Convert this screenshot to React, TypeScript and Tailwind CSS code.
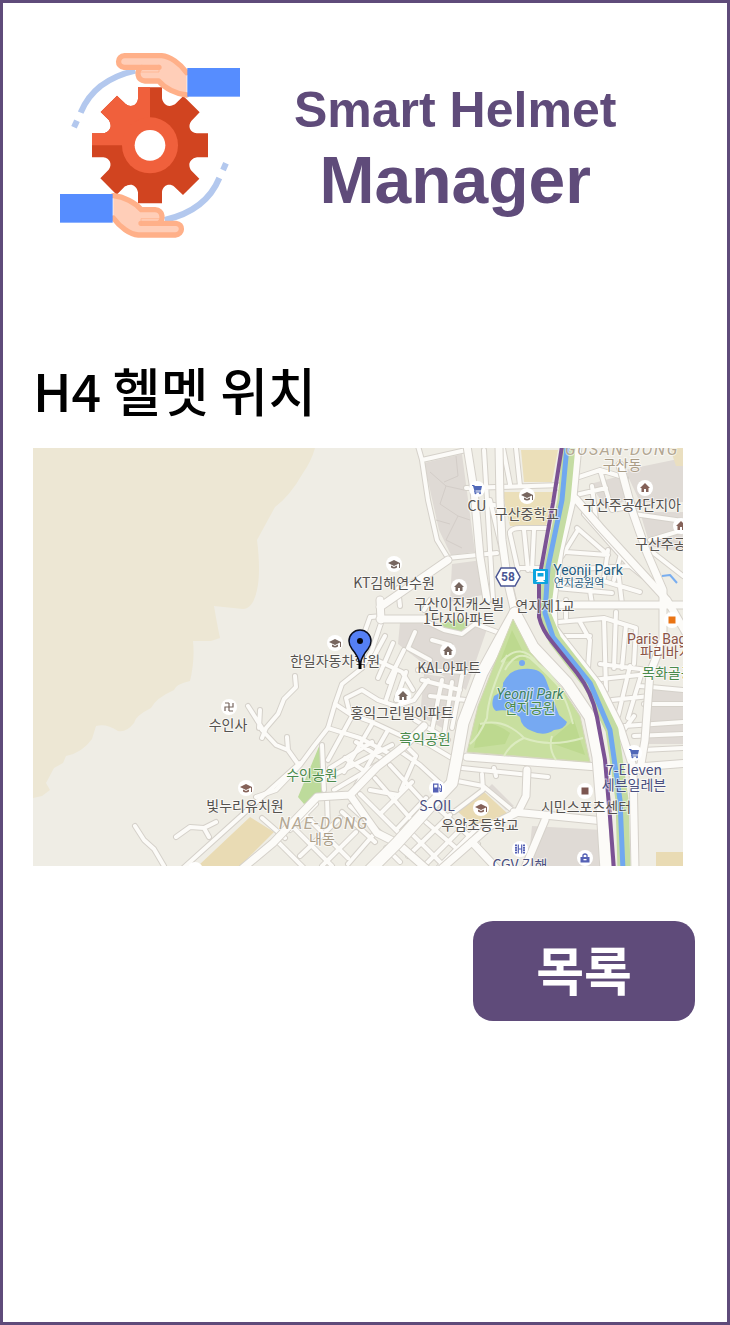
import React from "react";

type Spot = { x: number; y: number; kind: "home" | "school" | "cart" | "square" | "fuel" | "film" | "bag" | "temple"; color: string };
type Tone = "plain" | "park" | "station" | "shop" | "food" | "district";
type Label = { x: number; y: number; text: string; anchor?: "start" | "middle"; tone?: Tone };

const toneClass: Record<Tone, string> = {
  plain: "fill-[#55524f]",
  park: "fill-[#4a8a4c]",
  station: "fill-[#1f5c80]",
  shop: "fill-[#4a4f80]",
  food: "fill-[#8a5346]",
  district: "fill-[#a99c86]",
};

const labels: Label[] = [
  { x: 477, y: 511, text: "CU" },
  { x: 527, y: 519, text: "구산중학교" },
  { x: 583, y: 510, text: "구산주공4단지아", anchor: "start" },
  { x: 635, y: 549, text: "구산주공", anchor: "start" },
  { x: 622, y: 470, text: "구산동", tone: "district" },
  { x: 394, y: 588, text: "KT김해연수원" },
  { x: 459, y: 609, text: "구산이진캐스빌" },
  { x: 459, y: 624, text: "1단지아파트" },
  { x: 545, y: 611, text: "연지제1교" },
  { x: 335, y: 666, text: "한일자동차학원" },
  { x: 449, y: 673, text: "KAL아파트" },
  { x: 402, y: 718, text: "홍익그린빌아파트" },
  { x: 228, y: 730, text: "수인사" },
  { x: 425, y: 744, text: "흑익공원", tone: "park" },
  { x: 312, y: 780, text: "수인공원", tone: "park" },
  { x: 245, y: 811, text: "빛누리유치원" },
  { x: 322, y: 844, text: "내동", tone: "district" },
  { x: 437, y: 811, text: "S-OIL", tone: "shop" },
  { x: 480, y: 830, text: "우암초등학교" },
  { x: 520, y: 870, text: "CGV 김해", tone: "shop" },
  { x: 586, y: 812, text: "시민스포츠센터" },
  { x: 634, y: 775, text: "7-Eleven", tone: "shop" },
  { x: 634, y: 790, text: "세븐일레븐", tone: "shop" },
  { x: 640, y: 657, text: "파리바게", anchor: "start", tone: "food" },
  { x: 642, y: 678, text: "목화골공", anchor: "start", tone: "park" },
  { x: 530, y: 713, text: "연지공원", tone: "park" },
];

const spots: Spot[] = [
  { x: 477, y: 489, kind: "cart", color: "#5068b8" },
  { x: 527, y: 496, kind: "school", color: "#77665f" },
  { x: 645, y: 488, kind: "home", color: "#856259" },
  { x: 681, y: 526, kind: "home", color: "#856259" },
  { x: 394, y: 564, kind: "school", color: "#77665f" },
  { x: 459, y: 587, kind: "home", color: "#77665f" },
  { x: 335, y: 643, kind: "school", color: "#77665f" },
  { x: 448, y: 651, kind: "home", color: "#77665f" },
  { x: 403, y: 696, kind: "home", color: "#77665f" },
  { x: 229, y: 707, kind: "temple", color: "#77665f" },
  { x: 246, y: 788, kind: "school", color: "#856259" },
  { x: 437, y: 788, kind: "fuel", color: "#5561b5" },
  { x: 481, y: 808, kind: "school", color: "#856259" },
  { x: 520, y: 849, kind: "film", color: "#5561b5" },
  { x: 585, y: 858, kind: "bag", color: "#5561b5" },
  { x: 585, y: 791, kind: "square", color: "#7c5650" },
  { x: 634, y: 753, kind: "cart", color: "#5068b8" },
  { x: 672, y: 620, kind: "square", color: "#ea7414" },
  { x: 195, y: 870, kind: "school", color: "#77665f" },
];

const alleys = [
  "M418 446 L422 460 L428 500 L437 540 L448 558 L497 553 M422 460 L466 450",
  "M370 617 L360 645 M371 617 L382 616 M362 668 L342 684 L335 704 L328 728 L314 746 L300 765 L276 790 L256 797",
  "M295 676 L296 687 L284 699 L278 714 L266 728 L262 738 M262 728 L248 706 M259 728 L260 710 M262 730 L276 745 L288 750 L287 737 M288 750 L298 764",
  "M135 826 L144 840 L154 849 L164 866 M176 837 L190 827 L204 828 L216 822 M204 828 L209 837 M181 870 L262 797 L300 763",
  "M382 620 L372 650 L362 668 M385 636 L372 660 M393 643 L378 678 M404 650 L388 682 M372 658 L402 672 L413 690 M396 670 L386 700 M406 672 L396 700",
  "M335 704 L350 714 L372 722 L402 736 L428 744 L455 760 M350 714 L346 698 L362 690 L378 700 L396 706 L414 700 L428 680",
  "M328 728 L360 738 L390 754 M352 716 L328 760 M372 724 L344 772 M388 730 L356 786 M322 745 L324 790",
  "M330 768 L372 742 M328 778 L392 745 M334 790 L400 751 M345 758 L366 772 M356 742 L384 760",
  "M400 751 L420 765 L445 788 M408 748 L416 756 L401 790 M390 765 L424 802 M375 778 L410 818 M360 794 L400 834 M412 782 L382 812 M426 798 L396 830 M398 795 L370 790",
  "M327 797 L328 828 M302 812 L348 858 M290 824 L332 866 M276 840 L304 868 M262 818 L285 838 M316 804 L290 830 M340 818 L300 856 M356 832 L322 866 M342 812 L375 842 M350 806 L386 838 M374 834 L348 864",
  "M400 862 L386 848 M450 815 L408 856 M464 826 L424 866 M440 810 L478 844 M426 822 L456 848 M412 834 L444 866 M438 868 L480 825",
  "M462 768 L548 777 M494 768 L496 776 M452 780 L483 786 L512 810 M482 774 L483 790 L454 812",
  "M415 632 L408 648 L430 660 M432 640 L450 645 M418 670 L466 672 M430 696 L466 700 M442 680 L432 730 M452 682 L444 735 M462 676 L452 728 M422 680 L460 690 M415 720 L448 740",
  "M423 620 L444 630 L462 634 L475 624 L497 632 M398 588 L400 606 M424 610 L430 600",
  "M466 488 L562 485 M484 450 L493 600 M490 500 L514 600 M516 448 L520 486 M503 448 L510 484 M486 504 L502 506",
  "M510 532 Q512 528 520 528 L548 528 M524 530 L528 570 M510 534 L518 570 M534 530 L532 570 M520 568 L542 568",
  "M578 530 L562 556 M584 514 L630 566 M577 528 L608 555 L566 552 M608 550 L604 578 M622 550 L614 580 M562 570 L630 566 L655 586",
  "M556 588 L612 593 M566 600 L566 618 M560 584 L600 580 L640 592 M588 578 L592 604 M618 570 L622 604",
  "M570 480 L600 470 L626 478 M600 470 L612 510 L640 505 M634 514 L683 521 M642 544 L683 576 M650 540 L683 530 M576 495 L606 488 M592 486 L596 520 L616 545",
  "M558 622 L604 618 L636 628 L634 664 M580 622 L590 640 L588 668 M604 618 L606 690 M616 612 L614 668 M626 625 L622 668 M600 664 L648 670 M562 636 L590 636",
  "M592 680 L648 674 M612 700 L650 696 M624 726 L683 722 M634 736 L683 734 M618 716 L630 666 M628 718 L642 672 M640 686 L683 690 M644 704 L683 704 M642 750 L683 748 M618 738 L634 716",
];

const streets = [
  "M467 446 L474 490 L480 557 L487 600",
  "M499 446 L500 500 L502 540 L508 583 L515 613",
  "M380 607 L448 560 M380 600 L381 620 M380 619 L424 619",
  "M560 487 L576 499 L600 527 L633 563 L667 600 L690 640",
  "M543 605 L690 605",
  "M620 465 L633 513 L647 553 L663 590 L663 640 L650 673 L645 740 L640 770",
  "M578 446 L573 497 L560 550 L553 600 L554 628 L563 640 L600 687 L620 727 L633 767 L635 870",
  "M243 868 L273 843 L317 797 L350 795 L377 767 L403 747 L424 726",
  "M350 795 L377 833 L397 843 L430 872",
  "M467 757 L598 767",
  "M527 770 L526 796 L518 812 L490 826 L440 870 M514 812 L604 821 M545 820 L524 870",
  "M472 842 L500 872 M638 767 L690 763",
];

const avenues = [
  "M515 613 L500 640 L482 673 L463 723 L457 757 L452 783 L433 803 L397 843 L368 872",
  "M515 613 L533 647 L567 683 L590 717 L598 757 L602 807 L606 870",
];

function SpotGlyph({ kind, color }: { kind: Spot["kind"]; color: string }) {
  switch (kind) {
    case "home":
      return <path d="M-5 0 L0 -5 L5 0 H3.5 V4 H1 V1 H-1 V4 H-3.5 V0 Z" fill={color} />;
    case "school":
      return (
        <g fill={color}>
          <path d="M-6 -1 L0 -4 L6 -1 L0 2 Z" />
          <path d="M-3 1.5 L0 3 L3 1.5 V3.5 Q0 5.5 -3 3.5 Z M5 -1 H6 V4 H5 Z" />
        </g>
      );
    case "cart":
      return (
        <g fill={color}>
          <path d="M-5 -4 H-3 L-2 -3 H5 L4 1.5 H-1.5 L-1.5 2.5 H4 V3.5 H-3 L-2.7 1.5 L-4 -3 H-5 Z" />
          <circle cx="-1.5" cy="4.3" r="1" />
          <circle cx="3" cy="4.3" r="1" />
        </g>
      );
    case "square":
      return <rect x="-3.5" y="-3.5" width="7" height="7" fill={color} />;
    case "fuel":
      return (
        <g>
          <path d="M-4 -4.5 H1.5 V4.5 H-4 Z M-2.8 -3.2 V-0.5 H0.3 V-3.2 Z" fill={color} fillRule="evenodd" />
          <path d="M1.5 0 H3 V3.5 H4.5 V-2 L3 -4" fill="none" stroke={color} />
        </g>
      );
    case "film":
      return (
        <g fill="none" stroke={color}>
          <path d="M-4 -4.5 V4.5 M4 -4.5 V4.5" strokeWidth="2" strokeDasharray="1.8 0.6" />
          <path d="M-1.7 -4.5 V4.5 M1.7 -4.5 V4.5 M-1.7 0 H1.7" strokeWidth="1.2" />
        </g>
      );
    case "bag":
      return (
        <g>
          <rect x="-4.5" y="-1" width="9" height="5.5" fill={color} />
          <path d="M-2 -1 V-3 Q0 -5 2 -3 V-1" fill="none" stroke={color} strokeWidth="1.3" />
          <rect x="-1.5" y="1" width="3" height="1.3" fill="#fff" />
        </g>
      );
    case "temple":
      return <path d="M4 -4 V0 H-4 V4 M0 -4 V4 M0 -4 H-4 M0 4 H4" fill="none" stroke={color} strokeWidth="1.2" />;
  }
}

function Roads({ lines, edge, width }: { lines: string[]; edge: number; width: number }) {
  return (
    <g fill="none" strokeLinecap="round" strokeLinejoin="round">
      {lines.map((d) => <path key={"e" + d} d={d} stroke="#d5d1ca" strokeWidth={edge} />)}
      {lines.map((d) => <path key={"r" + d} d={d} stroke="#fcfbf8" strokeWidth={width} />)}
    </g>
  );
}

function HelmetMap() {
  return (
    <svg viewBox="33 448 650 418" className="block w-full h-auto" role="img" aria-label="H4 헬멧 위치 지도">
      <rect x="33" y="448" width="650" height="418" fill="#efede5" />
      <path d="M33 448 H315 Q311 462 303 473 Q290 496 275 507 L257 540 Q261 572 257 590 Q253 609 243 609 L214 606 Q217 624 220 638 L211 641 L193 641 Q195 660 190 681 Q176 684 174 690 Q156 698 151 708 Q135 716 134 723 Q126 733 118 731 Q106 723 96 726 L92 739 Q82 753 66 756 L63 763 L54 768 L46 783 L50 790 L42 796 L33 798 Z" fill="#ede7d4" />
      <path d="M424 463 L462 454 L475 552 L451 555 L439 530 Z M452 564 L482 560 L487 594 L450 602 Z M400 622 L488 626 L466 690 L424 664 L398 644 Z M424 674 L464 680 L446 730 L420 716 Z M625 470 L683 458 V502 H640 Z M640 512 H683 V552 L650 546 Z M650 690 H683 V744 H646 Z M532 826 L602 830 V866 H528 Z M492 784 L514 806 L506 810 L486 790 Z M590 484 L620 476 L628 500 L606 508 Z" fill="#dfdad5" />
      <path d="M521 450 H558 L552 482 H524 Z M502 492 H553 L546 526 H510 Z" fill="#ebdfb9" />
      <path d="M198 866 L250 817 L274 832 L240 866 Z M656 852 H683 V866 H656 Z M458 812 L481 789 L508 814 L486 828 L470 822 Z" fill="#e9dbb4" />
      <path d="M670 448 H683 V466 H676 Z" fill="#eadfc0" />
      <path d="M320 744 L323 795 L304 804 L298 797 Z M440 624 L462 618 L470 628 L456 634 Z" fill="#bddb9b" />
      <g fill="none" stroke="#d3cdc8" strokeWidth="1">
        <path d="M430 472 L446 486 L440 504 L458 516 L446 540 L462 548 M446 486 L464 490 M458 516 L470 520 M436 520 L450 524 M456 456 L458 476 L444 482" />
      </g>

      <Roads lines={alleys} edge={6} width={4} />
      <Roads lines={streets} edge={9} width={7} />
      <Roads lines={avenues} edge={13} width={11} />

      <path d="M513 619 L530 652 L563 690 L580 716 L590 762 L467 752 L478 706 L494 665 Z" fill="#c8df9f" stroke="#d4d6bb" />
      <path d="M479 724 Q492 720 510 733 L505 744 L474 748 Z M548 742 L574 720 L585 755 Z M512 630 L527 660 L500 662 Z" fill="#bdd98f" />
      <path d="M501 662 Q521 640 538 664 Q562 680 573 724 M505 670 Q516 650 530 658 Q548 674 562 690 M480 724 Q505 718 524 738 Q550 748 583 738 M507 655 Q488 694 487 718 Q478 738 470 744 M552 736 Q548 748 556 760 M524 738 Q510 744 504 756" fill="none" stroke="#dcebc0" strokeWidth="2" />
      <path d="M503 683 Q510 669 523 669 Q541 667 546 680 L553 699 L559 715 L567 722 Q565 729 554 730 Q544 737 532 731 Q521 727 520 717 Q509 708 496 711 Q490 706 494 696 Q504 691 503 683 Z" fill="#76a9f2" />
      <circle cx="522" cy="663" r="3" fill="#76a9f2" />

      <g fill="none" strokeLinejoin="round">
        <path d="M569 446 L564 500 L550 567 L544 613 L555 640 L590 685 L612 730 L622 800 L624 870" stroke="#c4dca3" strokeWidth="13" />
        <path d="M567 446 L562 500 L548 567 L545 613 L553 637 L590 683 L610 730 L620 800 L623 870" stroke="#70a8f0" strokeWidth="5" />
        <path d="M562 446 L553 503 L539 580 L539 617 Q542 630 553 643 L577 673 Q592 692 597 717 L605 760 L610 817 L614 870" stroke="#7b5294" strokeWidth="4" />
        <path d="M662 576 L670 575 L677 583" stroke="#79aef0" strokeWidth="2" />
      </g>

      <path d="M501 568 H515 L520 577 L515 586 H501 L496 577 Z" fill="#fff" stroke="#4a5594" strokeWidth="1.5" />
      <text x="508" y="581" textAnchor="middle" className="font-['Roboto',sans-serif] text-[12px] font-bold fill-[#4a5594]">58</text>
      <rect x="533" y="569" width="15" height="15" rx="1" fill="#0da5df" />
      <path d="M536 571 H545 V580 H543 L545 582 H536 L538 580 H536 Z M537.500 573 V576.500 H543.500 V573 Z" fill="#fff" fillRule="evenodd" />

      {spots.map((s) => (
        <g key={`${s.x}-${s.y}`} transform={`translate(${s.x} ${s.y})`}>
          <circle r="8" fill="#fff" />
          <SpotGlyph kind={s.kind} color={s.color} />
        </g>
      ))}

      <g textAnchor="middle" stroke="#ffffff" strokeOpacity="0.6" strokeWidth="2" strokeLinejoin="round" style={{ paintOrder: "stroke" }}>
        {labels.map((l) => (
          <text key={l.text} x={l.x} y={l.y} textAnchor={l.anchor ?? "middle"} className={`font-['Noto_Sans_CJK_KR',sans-serif] text-[14px] ${toneClass[l.tone ?? "plain"]}`}>{l.text}</text>
        ))}
        <text x="622" y="455" className="font-['Roboto',sans-serif] text-[16px] italic tracking-widest fill-[#b3a793]">GUSAN-DONG</text>
        <text x="324" y="829" className="font-['Roboto',sans-serif] text-[16px] italic tracking-widest fill-[#b3a793]">NAE-DONG</text>
        <text x="588" y="575" className="font-['Roboto',sans-serif] text-[14px] fill-[#1f5c80]">Yeonji Park</text>
        <text x="579" y="587" className="font-['Noto_Sans_CJK_KR',sans-serif] text-[11px] fill-[#1f5c80]">연지공원역</text>
        <text x="530" y="699" className="font-['Roboto',sans-serif] text-[14px] italic fill-[#3d8061]">Yeonji Park</text>
        <text x="627" y="644" textAnchor="start" className="font-['Roboto',sans-serif] text-[14px] fill-[#8a5346]">Paris Bag</text>
      </g>

      <path d="M360 669 V655" stroke="#000" strokeWidth="3" />
      <path d="M360 664 Q358 656 352 649 Q349 645 349 641 A11 11 0 1 1 371 641 Q371 645 368 649 Q362 656 360 664 Z" fill="#5580f5" stroke="#0a0d1c" strokeWidth="1.5" />
      <circle cx="360" cy="641" r="3" fill="#05070f" />
    </svg>
  );
}

function Hand() {
  return (
    <g>
      <path d="M92 218 Q132 120 256 92" fill="none" stroke="#b3c8ee" strokeWidth="18" />
      <path d="M72 262 L81 242" fill="none" stroke="#b3c8ee" strokeWidth="18" />
      <path d="M410 98 C390 70 360 49 335 47 H224 C200 49 200 80 222 82 H275 C258 90 260 121 285 123 H326 C345 145 378 162 410 165 Z" fill="#ffceb8" />
      <path d="M410 98 C390 70 360 49 335 47 H224 C200 49 200 80 222 82 H327 M275 82 C258 90 260 121 285 123 H326 C345 145 378 162 410 165" fill="none" stroke="#ffb089" strokeWidth="16" strokeLinejoin="round" strokeLinecap="round" />
      <path d="M327 74 V96 H270" fill="none" stroke="#ffb089" strokeWidth="2" />
      <rect x="412" y="84" width="158" height="86" fill="#568dff" />
    </g>
  );
}

const gearPath =
  "M-36 -174 H36 V-141 C38 -126 50 -118 58 -118 C66 -118 70 -121 75 -123 L100 -148 L149 -99 L124 -73 C112 -58 120 -38 140 -36 " +
  "H174 V36 H141 C126 38 118 50 118 58 C118 66 121 70 123 75 L148 100 L99 149 L73 124 C58 112 38 120 36 140 " +
  "V174 H-36 V141 C-38 126 -50 118 -58 118 C-66 118 -70 121 -75 123 L-100 148 L-149 99 L-124 73 C-112 58 -120 38 -140 36 " +
  "H-174 V-36 H-141 C-126 -38 -118 -50 -118 -58 C-118 -66 -121 -70 -123 -75 L-148 -100 L-99 -149 L-73 -124 C-58 -112 -38 -120 -36 -140 Z";

function Logo() {
  return (
    <svg viewBox="0 0 600 630" className="w-[200px] h-[210px] shrink-0" aria-hidden="true">
      <defs>
        <clipPath id="lit">
          <rect x="-200" y="-200" width="200" height="200" />
        </clipPath>
      </defs>
      <g transform="translate(300 316)">
        <path d={gearPath} fill="#d14420" />
        <path d={gearPath} fill="#f0603c" clipPath="url(#lit)" />
        <circle r="84" fill="#f0603c" />
        <circle r="46" fill="#fff" />
      </g>
      <Hand />
      <g transform="rotate(180 300 316)"><Hand /></g>
    </svg>
  );
}

export default function App() {
  return (
    <main className="min-h-screen border-[3px] border-[#5f4b7a] bg-white px-[30px] pt-[37px] pb-10">
      <header className="flex items-center pl-[17px]">
        <Logo />
        <h1 className="ml-11 mt-[10px] flex flex-col text-center font-['Liberation_Sans',sans-serif] font-bold text-[#5f4b7a]">
          <span className="text-[50px] leading-[60px]">Smart Helmet</span>
          <span className="text-[66px] leading-[80px]">Manager</span>
        </h1>
      </header>
      <h2 className="mt-[102px] font-['Noto_Sans_CJK_KR',sans-serif] text-[52px] leading-[76px] font-medium text-black">H4 헬멧 위치</h2>
      <div className="mt-5 mr-[14px]">
        <HelmetMap />
      </div>
      <div className="mt-[55px] flex justify-end pr-[2px]">
        <button type="button" className="h-[100px] w-[222px] rounded-[20px] bg-[#5f4b7a] pb-1 font-['Noto_Sans_CJK_KR',sans-serif] text-[52px] leading-[76px] font-bold text-white">목록</button>
      </div>
    </main>
  );
}
